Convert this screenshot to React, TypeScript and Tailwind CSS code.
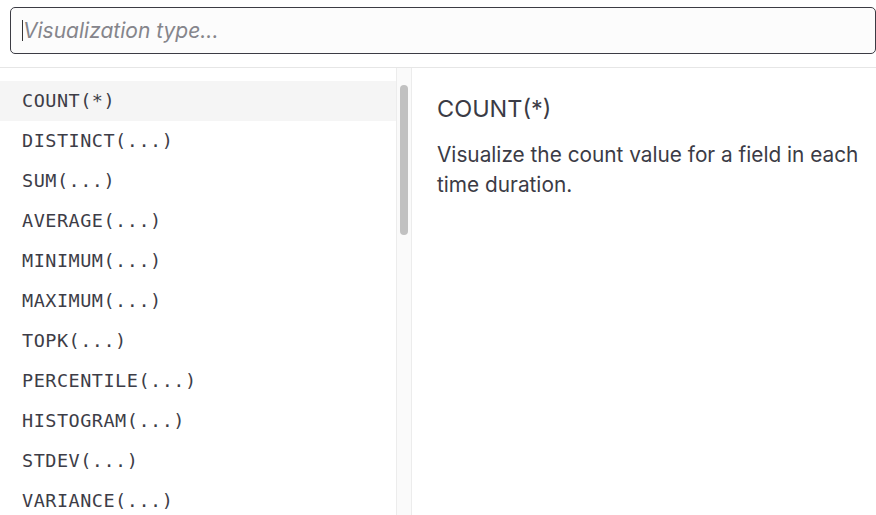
import { useState } from "react"

const TYPES = [
  "COUNT(*)",
  "DISTINCT(...)",
  "SUM(...)",
  "AVERAGE(...)",
  "MINIMUM(...)",
  "MAXIMUM(...)",
  "TOPK(...)",
  "PERCENTILE(...)",
  "HISTOGRAM(...)",
  "STDEV(...)",
  "VARIANCE(...)",
]

export default function App() {
  const [active, setActive] = useState(0)

  return (
    <div className="w-[876px] h-[515px] overflow-hidden bg-white flex flex-col text-[#3b3b45]" style={{ fontFamily: "Inter, 'Noto Sans', sans-serif" }}>
      {/* ── Search box ── */}
      <div className="pl-[10px] pt-[7px] pb-[13px] border-b border-[#e6e6e6]">
        <div className="h-[47px] border border-[#3c3c44] rounded-[5px] bg-[#fcfcfc] flex items-center pl-[11px]">
          <div className="w-px h-[21px] bg-[#333]" />
          <input
            className="flex-1 bg-transparent outline-none italic text-[21px] placeholder:text-[#85858b]"
            placeholder="Visualization type..."
          />
        </div>
      </div>

      {/* ── Body ── */}
      <div className="flex flex-1 min-h-0">
        {/* List */}
        <div className="w-[396px] pt-[13px] flex flex-col">
          {TYPES.map((t, i) => (
            <button
              key={t}
              type="button"
              onClick={() => setActive(i)}
              className={`h-[40px] shrink-0 flex items-center pl-[22px] text-left text-[18.5px] tracking-[0.5px] text-[#3d3d47] ${
                i === active ? "bg-[#f5f5f5]" : ""
              }`}
              style={{ fontFamily: "'DejaVu Sans Mono', monospace" }}
            >
              {t}
            </button>
          ))}
        </div>

        {/* Scrollbar */}
        <div className="w-[16px] border-l border-r border-[#ececec] bg-[#fafafa] pt-[17px] flex justify-center">
          <div className="w-[8px] h-[150px] rounded-full bg-[#c1c1c1]" />
        </div>

        {/* Detail */}
        <div className="flex-1 pl-[25px] pt-[26px]">
          <h2 className="text-[23.5px] leading-[30px]">{TYPES[active]}</h2>
          <p className="mt-[16px] text-[20.8px] leading-[30px] w-[430px]">
            Visualize the count value for a field in each time duration.
          </p>
        </div>
      </div>
    </div>
  )
}
